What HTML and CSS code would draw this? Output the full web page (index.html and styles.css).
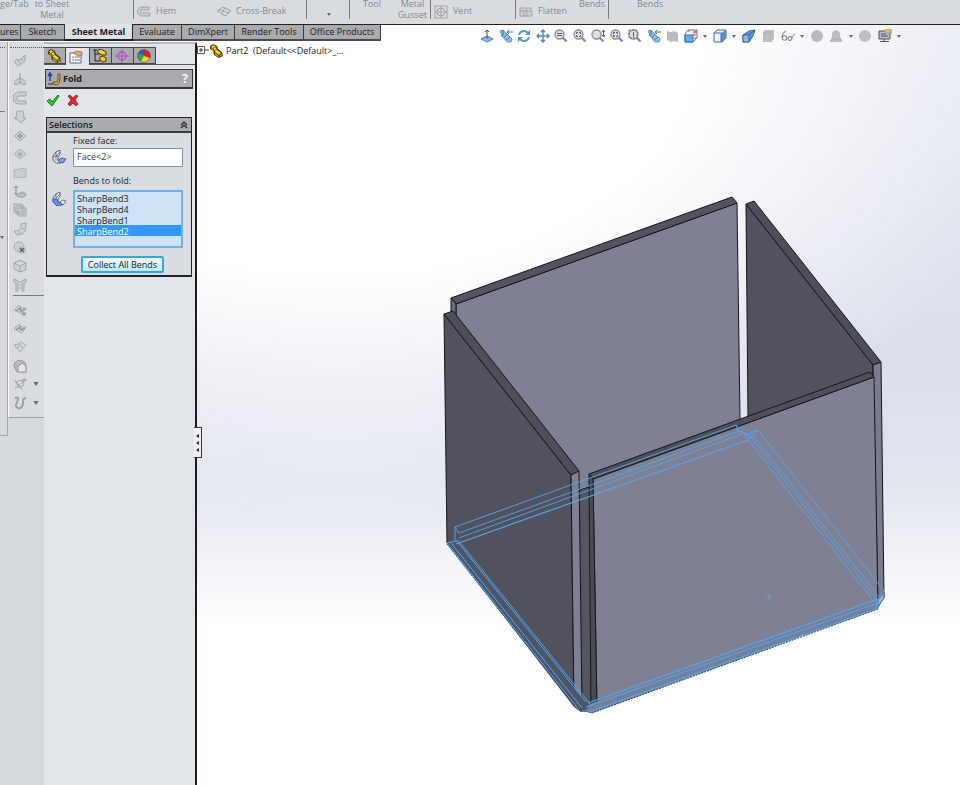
FILE: index.html
```html
<!DOCTYPE html>
<html lang="en">
<head>
  <meta charset="UTF-8" />
  <title>Part2 - Sheet Metal</title>
  <link rel="stylesheet" href="styles.css">
</head>
<body>
  <!-- shared icons -->
  <svg class="sprite" aria-hidden="true">
    <symbol id="i-part" viewBox="0 0 14 14"><path d="M1 2l3-2 4 2 1 3 4 3 1 4-4 2-5-3-1-4-3-2z" fill="#4a3a08"/><path d="M2 3l2-2 3 2 1 3 4 3-2 2-4-3-1-3z" fill="#f5d63a"/><path d="M2 4l2 1 1 3-2-2zM6 9l4 3v1L6 11zM11 11l2-1v1l-2 2z" fill="#d8a91c"/><path d="M4 4l3-1M6 7l2-2" stroke="#6b5410" stroke-width=".8"/></symbol>
    <symbol id="i-gpart" viewBox="0 0 14 14"><path d="M1 7l5-5 3 3 4 0-4 6-4-2z" fill="#c9cccf" stroke="#aaadb1"/><path d="M3 8l4-3 1 3 4-2" fill="none" stroke="#8f9296" stroke-width="1.300"/></symbol>
    <symbol id="i-lens" viewBox="0 0 14 14"><path d="M8.500 8.500l4 4" stroke="#6d8fc0" stroke-width="2.400"/><circle cx="5.500" cy="5.500" r="4.500" fill="#dddfe4" stroke="#8a8d92" stroke-width="1.300"/></symbol>
    <symbol id="i-spot" viewBox="0 0 14 14"><path d="M1 2l3-1 5 5 4 4-1 3-4 0-4-5z" fill="#8fbfe9" stroke="#4f83b5" stroke-width=".8"/><path d="M4 1v5l-2 1M8 5L5 9M11 8l-4 3" stroke="#42739f" fill="none"/><path d="M8 3h6M8 3l2-2M8 3l2 2" stroke="#3878b4" fill="none"/></symbol>
    <symbol id="i-arrow" viewBox="0 0 4 3"><path d="M0 0h4L2 3z" fill="#666a70"/></symbol>
    <symbol id="i-diamond" viewBox="0 0 14 14"><path d="M1 7l6-5 6 5-6 5z" fill="#cfd2d5" stroke="#aaadb1"/><path d="M4 7h6M7 4v6" stroke="#96999d" stroke-width="1.500"/></symbol>
  </svg>

  <header class="ribbon">
    <div class="cmd edge">ge/Tab</div>
    <div class="cmd to-sheet">to Sheet<br>Metal</div>
    <div class="group hem">
      <svg class="ico" viewBox="0 0 14 14"><path d="M12 2H5a4 4 0 0 0 0 9h8V8H5a1 1 0 0 1 0-3h7z" fill="#cbced2" stroke="#a0a3a7"/></svg><span>Hem</span>
    </div>
    <div class="group-plain cross">
      <svg class="ico" viewBox="0 0 14 14"><path d="M0 6l6-4 8 4-6 5zM2 5l10 3M5 9l3-7" fill="none" stroke="#9da0a4"/></svg><span>Cross-Break</span>
    </div>
    <div class="group more"><svg class="caret" viewBox="0 0 4 3"><use href="#i-arrow"/></svg></div>
    <div class="group gusset"><div class="cmd">Tool</div><div class="cmd">Metal<br>Gusset</div></div>
    <div class="group vent">
      <svg class="ico" viewBox="0 0 14 14"><path d="M1 1h12v12H1zM7 1v12M1 7h12" fill="none" stroke="#a0a3a7"/><circle cx="7" cy="7" r="4" fill="none" stroke="#a0a3a7"/></svg><span>Vent</span>
    </div>
    <div class="group flatten">
      <svg class="ico" viewBox="0 0 14 14"><path d="M1 3h7v8H1zM5 6h8v5H5zM1 6h5M9 3h3v3" fill="#cbced2" stroke="#a0a3a7"/></svg><span>Flatten</span>
      <div class="cmd bends">Bends</div>
    </div>
    <div class="group last"><div class="cmd">Bends</div></div>
  </header>

  <main class="workspace">
    <div class="top">
      <nav class="tabs">
        <a class="tab t-features" href="#">ures</a>
        <a class="tab t-sketch" href="#">Sketch</a>
        <a class="tab t-sheet active" href="#">Sheet Metal</a>
        <a class="tab t-evaluate" href="#">Evaluate</a>
        <a class="tab t-dim" href="#">DimXpert</a>
        <a class="tab t-render" href="#">Render Tools</a>
        <a class="tab t-office" href="#">Office Products</a>
      </nav>
      <div class="view-tools">
        <div class="tools-a">
          <button class="tool" aria-label="Normal to"><svg viewBox="0 0 14 14"><path d="M1 10l6-3 6 3-6 3z" fill="#8fbbe8" stroke="#477fb9"/><path d="M7 10V1M5 3l2-2 2 2" stroke="#4a4d55" fill="none"/></svg></button>
          <button class="tool" aria-label="Previous view"><svg viewBox="0 0 14 14"><use href="#i-spot"/></svg></button>
          <button class="tool" aria-label="Rotate"><svg viewBox="0 0 14 14"><path d="M2 6c1-5 7-5 9-2M12 8c-1 5-7 5-9 2" stroke="#5b97cd" stroke-width="2" fill="none"/><path d="M13 1v5H8zM1 13V8h5z" fill="#5b97cd"/></svg></button>
          <button class="tool" aria-label="Pan"><svg viewBox="0 0 14 14"><path d="M7 1v12M1 7h12M5 3l2-2 2 2M5 11l2 2 2-2M3 5L1 7l2 2M11 5l2 2-2 2" stroke="#4a8ac9" stroke-width="1.400" fill="none"/></svg></button>
          <button class="tool" aria-label="Zoom to selection"><svg viewBox="0 0 14 14"><use href="#i-lens"/><path d="M3 4.500h5M3 6.500h5" stroke="#5c5f65"/></svg></button>
          <button class="tool" aria-label="Zoom to fit"><svg viewBox="0 0 14 14"><use href="#i-lens"/><path d="M3.500 5V3.500H5M6 3.500h1.500V5M3.500 6v1.500H5M6 7.500h1.500V6" stroke="#5c5f65" fill="none"/></svg></button>
          <button class="tool" aria-label="Zoom in out"><svg viewBox="0 0 14 14"><use href="#i-lens"/><path d="M12.500 1v7M11 3l1.500-2L14 3M11 6l1.500 2L14 6" stroke="#5c5f65" fill="none"/></svg></button>
          <button class="tool" aria-label="Zoom sheet"><svg viewBox="0 0 14 14"><use href="#i-lens"/><path d="M3.500 5V3.500H5M6 3.500h1.500V5M3.500 6v1.500H5M6 7.500h1.500V6" stroke="#5c5f65" fill="none"/></svg></button>
          <button class="tool" aria-label="Zoom to area"><svg viewBox="0 0 14 14"><use href="#i-lens"/><path d="M1 1h8v8H1z" stroke="#74777d" fill="none" stroke-dasharray="2 1"/><path d="M5.500 3v5" stroke="#5c5f65"/></svg></button>
          <button class="tool" aria-label="Last view"><svg viewBox="0 0 14 14"><use href="#i-spot"/></svg></button>
          <button class="tool" aria-label="Section view"><svg viewBox="0 0 14 14"><path d="M2 2l4 1 3-1 4 2v9l-4-1-3 1-4-2z" fill="#b9bbbf"/></svg></button>
          <button class="tool" aria-label="View orientation"><svg viewBox="0 0 14 14"><path d="M1 5l3-4h9v8l-4 4H1z" fill="#f2f4f8" stroke="#6c7380"/><path d="M1 6h8v7H1z" fill="#68aee4" stroke="#356fa8"/><path d="M9 6l4-5M5 1v3M9 3h4M11 2v8" stroke="#ad5761" stroke-dasharray="2 1"/></svg></button>
        </div>
        <div class="tools-b">
          <svg class="caret" viewBox="0 0 4 3"><use href="#i-arrow"/></svg>
          <button class="tool" aria-label="Display style"><svg viewBox="0 0 14 14"><path d="M1 4l3-3h9v8l-4 4H1z" fill="#f0f5fc" stroke="#4668a4"/><path d="M8 4l5-3v8l-4 4H8z" fill="#5f8ad2"/><path d="M1 4h7v9" fill="none" stroke="#4668a4"/></svg></button>
          <svg class="caret" viewBox="0 0 4 3"><use href="#i-arrow"/></svg>
          <button class="tool" aria-label="Shaded"><svg viewBox="0 0 14 14"><path d="M1 6l6-4 6-1-2 6-4 6H1z" fill="#5e97dc" stroke="#264f8c" stroke-width=".8"/><path d="M1 6h6v7H1z" fill="#8ab9ed" stroke="#264f8c" stroke-width=".8"/><path d="M7 6l6-5" stroke="#264f8c" stroke-width=".8"/></svg></button>
          <button class="tool" aria-label="Shadows"><svg viewBox="0 0 14 14"><path d="M2 3l2-2h9v9l-3 3H2z" fill="#bcbec1"/><path d="M2 4h8v9" stroke="#aeb0b4" fill="none"/></svg></button>
          <button class="tool" aria-label="Hide show items"><svg viewBox="0 0 14 14"><path d="M5 2C2 3 1 7 1 9" stroke="#73777f" fill="none"/><circle cx="3.500" cy="9" r="2.300" fill="none" stroke="#73777f"/><circle cx="9" cy="9.500" r="2" fill="none" stroke="#73777f"/><path d="M11 9c0-2 1-3 3-4" fill="none" stroke="#73777f"/></svg></button>
          <svg class="caret" viewBox="0 0 4 3"><use href="#i-arrow"/></svg>
          <button class="tool" aria-label="Appearance"><svg viewBox="0 0 14 14"><circle cx="7" cy="7" r="6" fill="#b9bbbf"/></svg></button>
          <button class="tool" aria-label="Scene"><svg viewBox="0 0 14 14"><path d="M3 8V5c0-5 8-5 8 0v3l2 5H1z" fill="#babcc0"/><path d="M1 12l4-3 3 2 3-2 2 3" stroke="#a7a9ad" fill="none"/></svg></button>
          <svg class="caret" viewBox="0 0 4 3"><use href="#i-arrow"/></svg>
          <button class="tool" aria-label="Render"><svg viewBox="0 0 14 14"><circle cx="7" cy="7" r="6" fill="#bec0c4"/></svg></button>
          <button class="tool" aria-label="View settings"><svg viewBox="0 0 14 14"><path d="M1 2h11v8H1z" fill="#b9bcc2" stroke="#4d5057"/><path d="M3 5h5M3 7h7M2 12.500h9M6 10v2" stroke="#4d5057" fill="none"/><path d="M6 2l3-2 5 1v3L9 4z" fill="#e6b976" stroke="#a87c3c" stroke-width=".6"/></svg></button>
          <svg class="caret" viewBox="0 0 4 3"><use href="#i-arrow"/></svg>
        </div>
      </div>
    </div>

    <div class="columns">
      <div class="docks">
        <aside class="dock-thin">
          <div class="rule"></div>
          <svg class="caret" viewBox="0 0 4 3"><use href="#i-arrow"/></svg>
        </aside>
        <aside class="dock">
          <div class="stack stack-a">
            <button class="tool" aria-label="Base flange"><svg viewBox="0 0 14 14"><path d="M1 8l3-3 3 1 5-5v6l-6 5z" fill="#cdd0d3" stroke="#a4a7ab"/><path d="M5 6l3 4M8 4l2 3" stroke="#a4a7ab"/></svg></button>
            <button class="tool" aria-label="Lofted bend"><svg viewBox="0 0 14 14"><path d="M1 11c1-7 11-7 12 0l-3 1c-1-4-5-4-6 0z" fill="#cdd0d3" stroke="#a4a7ab"/><path d="M7 0v12" stroke="#96999d"/></svg></button>
            <button class="tool" aria-label="Hem"><svg viewBox="0 0 14 14"><path d="M13 1H6a5 5 0 0 0 0 12h7v-3H6a2 2 0 0 1 0-5h7z" fill="#cdd0d3" stroke="#a0a3a7"/></svg></button>
            <button class="tool" aria-label="Jog"><svg viewBox="0 0 14 14"><path d="M4 1h6l1 7h2l-5 5-3-3-4-2h2z" fill="#cdd0d3" stroke="#a4a7ab"/></svg></button>
            <button class="tool" aria-label="Edge"><svg viewBox="0 0 14 14"><use href="#i-diamond"/></svg></button>
            <button class="tool" aria-label="Miter"><svg viewBox="0 0 14 14"><path d="M1 7l6-5 6 5-6 5z" fill="#cfd2d5" stroke="#aaadb1"/><path d="M7 5l3 2-3 3-3-3z" fill="#a9acb0"/></svg></button>
            <button class="tool" aria-label="Tab"><svg viewBox="0 0 14 14"><path d="M1 4l12-2v9L1 12z" fill="#c9cccf" stroke="#b1b4b8"/></svg></button>
            <button class="tool" aria-label="Forming tool"><svg viewBox="0 0 14 14"><path d="M2 8c0 5 11 6 11 1L9 7 5 9z" fill="#b9bcbf" stroke="#9da0a4"/><path d="M3 9V1M1 3l2-2 2 2" fill="none" stroke="#8a8d91"/></svg></button>
            <button class="tool" aria-label="Cut"><svg viewBox="0 0 14 14"><path d="M1 1h8v8H1zM3 3h8v8H3zM5 5h8v8H5z" fill="#cdd0d3" stroke="#a4a7ab"/></svg></button>
            <button class="tool" aria-label="Corner"><svg viewBox="0 0 14 14"><path d="M13 1v5c0 4-4 7-9 7l-3-4c5 0 7-3 7-7zM9 6l3 2M6 9l2 3" fill="#cdd0d3" stroke="#a4a7ab"/></svg></button>
            <button class="tool" aria-label="Break corner"><svg viewBox="0 0 14 14"><circle cx="6" cy="6" r="5" fill="#cdd0d3" stroke="#aaadb1"/><circle cx="9" cy="9" r="4" fill="#bfc2c5"/><path d="M7 7l4 4M11 7l-4 4" stroke="#65686d" stroke-width="1.500"/></svg></button>
            <button class="tool" aria-label="Convert"><svg viewBox="0 0 14 14"><path d="M1 4l6-3 6 3v7l-6 2-6-3zM1 4l6 3 6-3M7 7v6" fill="#cdd0d3" stroke="#a4a7ab"/></svg></button>
            <button class="tool" aria-label="Rip"><svg viewBox="0 0 14 14"><path d="M1 1l4 2v10H3V5L1 4zM13 1L9 3v10h2V5l2-1z" fill="#cdd0d3" stroke="#a4a7ab"/><path d="M7 3v9" stroke="#a4a7ab" stroke-dasharray="2 1"/></svg></button>
          </div>
          <div class="stack stack-b">
            <button class="tool" aria-label="Unfold"><svg viewBox="0 0 14 14"><use href="#i-gpart"/><path d="M7 7l5 5M12 9v3H9" stroke="#85888d" fill="none"/></svg></button>
            <button class="tool" aria-label="Fold"><svg viewBox="0 0 14 14"><use href="#i-gpart"/></svg></button>
            <button class="tool" aria-label="Flatten"><svg viewBox="0 0 14 14"><path d="M1 5l4-1 3-2 5 3-6 7z" fill="#d3d6d9" stroke="#aaadb1"/><path d="M5 4l5 4M7 5l-3 3" stroke="#a4a7ab"/></svg></button>
            <button class="tool" aria-label="No bends"><svg viewBox="0 0 14 14"><path d="M1 7c0-7 9-7 11-3l1 3v6H4z" fill="#b7babd" stroke="#96999d"/><path d="M5 13V8l4-4 4 3v6z" fill="#e3e5e8" stroke="#96999d"/></svg></button>
            <div class="with-caret"><button class="tool" aria-label="Reference geometry"><svg viewBox="0 0 14 14"><path d="M1 3l9 10M2 12L13 2M3 5l5-2 3 5-5 3zM11 1v5M9 3h5" fill="none" stroke="#a0a3a7"/></svg></button><svg class="caret-big" viewBox="0 0 4 3"><use href="#i-arrow"/></svg></div>
            <div class="with-caret"><button class="tool" aria-label="Curves"><svg viewBox="0 0 14 14"><path d="M2 2c7-2 0 6 1 8 3 5 7 1 7-3s0-5 3-5" fill="none" stroke="#9b9ea2" stroke-width="2"/></svg></button><svg class="caret-big" viewBox="0 0 4 3"><use href="#i-arrow"/></svg></div>
          </div>
        </aside>
      </div>

      <section class="panel">
        <div class="panel-tabs">
          <button class="ptab" aria-label="Feature tree"><svg viewBox="0 0 14 14"><use href="#i-part"/></svg></button>
          <button class="ptab on" aria-label="Properties"><svg viewBox="0 0 14 14"><path d="M1 3h11v10H1z" fill="#fff" stroke="#5a6785"/><path d="M3 7h2M3 10h2M6 7h5M6 10h5" stroke="#5a76aa"/><path d="M4 3l4-2 5 1v3l-4 1z" fill="#e4a768" stroke="#9c6a33" stroke-width=".7"/></svg></button>
          <button class="ptab" aria-label="Configurations"><svg viewBox="0 0 14 14"><path d="M2 1v11h5M2 5h4M0 1h4" fill="none" stroke="#222"/><path d="M5 1l3-1 5 3v3L9 6 5 4zM7 8l3-1 3 2v3l-3 1-3-2z" fill="#f1cf35" stroke="#443608"/></svg></button>
          <button class="ptab" aria-label="DimXpert"><svg viewBox="0 0 14 14"><circle cx="7" cy="7" r="4" fill="none" stroke="#b04cc9" stroke-width="1.300"/><path d="M7 0v14M0 7h14" stroke="#b04cc9"/></svg></button>
          <button class="ptab" aria-label="Display"><svg viewBox="0 0 14 14"><circle cx="7" cy="7" r="6.300" fill="#f2d13a"/><path d="M7 7L1 5a6.300 6.300 0 0 1 6-4.300z" fill="#3058c8"/><path d="M7 7V.7A6.300 6.300 0 0 1 13 9z" fill="#d6202a"/><path d="M7 7L1 5a6.300 6.300 0 0 0 3 7.600z" fill="#3aa645"/><circle cx="7" cy="7" r="6.300" fill="none" stroke="#4a3630" stroke-width=".6"/></svg></button>
        </div>

        <div class="title">
          <svg class="ico" viewBox="0 0 14 14"><path d="M3 9V2M1 4l2-3 2 3" fill="none" stroke="#2044b8" stroke-width="1.600"/><path d="M1 12h5" stroke="#333"/><path d="M6 10l3 0c2 0 2-3 2-8h2c0 8-1 11-4 11l-3-1z" fill="#e0aa2b" stroke="#4f3d12" stroke-width=".8"/></svg>
          <h1>Fold</h1>
          <button class="help" aria-label="Help">?</button>
        </div>
        <div class="confirm">
          <button class="tool" aria-label="OK"><svg viewBox="0 0 14 14"><path d="M1 8l3-2 2 3 6-7 1 1-7 10z" fill="#3dc73b" stroke="#16741a"/></svg></button>
          <button class="tool" aria-label="Cancel"><svg viewBox="0 0 14 14"><path d="M2 3l2-1 3 3 3-3 2 1-3 4 3 4-2 2-3-3-3 3-2-2 3-4z" fill="#e0262a" stroke="#921015" stroke-width=".7"/></svg></button>
        </div>

        <div class="box">
          <h2>Selections
            <svg class="chev" viewBox="0 0 8 8"><path d="M1 4l3-3 3 3M1 7l3-3 3 3" fill="none" stroke="#222" stroke-width="1.200"/></svg>
          </h2>
          <div class="form">
            <label for="face">Fixed face:</label>
            <div class="field">
              <svg class="ico" viewBox="0 0 14 14"><path d="M1 6l3-4 4-2v4L6 7v3l3 3H4L1 10z" fill="#e9ecf2" stroke="#4b5262" stroke-width=".9"/><path d="M1 7l5-1M4 2v9M4 6l4-4" stroke="#4b5262" fill="none" stroke-width=".7"/><path d="M6 10l4-2 4 1-3 4-4-1z" fill="#7fa3ea" stroke="#2b3f86" stroke-width=".8"/></svg>
              <input id="face" type="text" value="Face<2>">
            </div>
            <label for="bends">Bends to fold:</label>
            <div class="field list">
              <svg class="ico" viewBox="0 0 14 14"><path d="M1 6l3-4 4-2v4L6 7v3l3 3H4L1 10z" fill="#e9ecf2" stroke="#4b5262" stroke-width=".9"/><path d="M4 2v5M4 6l4-4" stroke="#4b5262" stroke-width=".7"/><path d="M1 7l4 0 1 3 4 1-1 3H5L1 10z" fill="#5f97e4" stroke="#2b4f96" stroke-width=".8"/><path d="M8 10l3-2 3 1-3 4z" fill="#e9ecf2" stroke="#4b5262" stroke-width=".8"/></svg>
              <select id="bends" size="5">
                <option>SharpBend3</option>
                <option>SharpBend4</option>
                <option>SharpBend1</option>
                <option selected>SharpBend2</option>
              </select>
            </div>
            <button class="collect">Collect All Bends</button>
          </div>
        </div>
        <button class="splitter" aria-label="Hide panel"><svg viewBox="0 0 6 28"><path d="M5 5v4L2 7zM5 12v4l-3-2zM5 19v4l-3-2z" fill="#222"/></svg></button>
      </section>

      <section class="viewport">
        <div class="tree">
          <svg class="plus" viewBox="0 0 12 9"><path d="M.5.500h7v7h-7z" fill="#fff" stroke="#555"/><path d="M2 4h4M4 2v4M8 4h4" stroke="#333"/></svg>
          <svg class="ico" viewBox="0 0 14 14"><use href="#i-part"/></svg>
          <span>Part2&nbsp; (Default&lt;&lt;Default&gt;_...</span>
        </div>
        <svg class="model" viewBox="440 190 450 530">
          <g stroke="#15161c" stroke-width="1" stroke-linejoin="round">
            <!-- back wall -->
            <path d="M456 304L737 203L740 420L592 480L592 500H578L456 330z" fill="#7f8093"/>
            <path d="M451 298L732 197L737 203L456 304z" fill="#53545f"/>
            <path d="M451 298L456 304V316L451 312z" fill="#6a6b7b"/>
            <!-- right wall -->
            <path d="M746 204L873 365V390L748 418z" fill="#51525d"/>
            <path d="M746 204L754 201L881 362L873 365z" fill="#4d4e59"/>
            <path d="M873 365L881 362L884 597L878 607z" fill="#7a7b8d"/>
            <!-- left wall -->
            <path d="M579 490L592 486L594 710L580 708z" fill="#53555f"/>
            <path d="M444 314L571 475L574 704L447 543z" fill="#51525d"/>
            <path d="M444 314L453 311L579 471L571 475z" fill="#4d4e59"/>
            <path d="M571 475L579 471L582 706L574 704z" fill="#7f8093"/>
            <!-- front wall -->
            <path d="M593 479L874 377L878 608L597 710z" fill="#7f8093"/>
            <path d="M589 474L870 372L874 377L593 479z" fill="#4f505b"/>
            <path d="M589 474L593 479L597 710L591 710z" fill="#4a4b56"/>
          </g>
          <!-- base edge -->
          <path d="M447 543L456 540L586 703L592 712H581L574 707z" fill="#4d5567"/>
          <path d="M590 704L878 600V608L592 713L586 711z" fill="#74809b"/>
          <path d="M878 600L884 592V598L878 607z" fill="#a7b0c2" stroke="#536077"/>
          <path d="M447 544L577 709L592 713L878 609" fill="none" stroke="#263c59" stroke-dasharray="2 1"/>
          <!-- selected edges -->
          <g fill="none" stroke="#58a4ee">
            <path d="M455 527L736 425L739 431L459 533zM455 527V541M459 538L742 434" stroke-width=".9"/>
            <path d="M456 544L748 440" stroke-width="1.200"/>
            <path d="M736 425L739 431L748 434L758 430L748 440M742 432L750 438"/>
            <path d="M758 430L884 591M752 434L879 597M748 433L877 600M743 433L874 602" stroke-width=".9"/>
            <path d="M456 540L586 702M458 540L590 704M447 543L456 541M451 543L582 708M447 543L579 710"/>
            <path d="M588 703L878 599V608L592 711L582 711" stroke-width="1.200"/>
            <path d="M586 707L878 603M884 591L878 599M876 597V608"/>
            <path d="M766 597H772M769 594V600"/>
          </g>
        </svg>
      </section>
    </div>
  </main>
</body>
</html>
```
FILE: styles.css
```css
* {
  box-sizing: border-box;
}
body {
  margin: 0;
  height: 100vh;
  display: flex;
  flex-direction: column;
  overflow: hidden;
  font-family: "Open Sans", "Noto Sans", sans-serif;
  font-size: 9px;
  line-height: 11px;
  color: #1c1c1e;
}
button {
  font: inherit;
  padding: 0;
  border: none;
  background: none;
  cursor: pointer;
}
svg {
  display: block;
  flex: none;
}
.sprite {
  position: absolute;
  width: 0;
  height: 0;
}
.ico, .tool {
  width: 14px;
  height: 14px;
  flex: none;
}
.caret {
  width: 4px;
  height: 3px;
}
.caret-big {
  width: 6px;
  height: 4px;
}

/* ribbon */
.ribbon {
  display: flex;
  flex: none;
  height: 25px;
  background: #d9dce1;
  border-bottom: 1px solid #222;
  color: #85878b;
  white-space: nowrap;
  overflow: hidden;
}
.cmd {
  text-align: center;
  margin-top: -2px;
}
.edge {
  width: 27px;
}
.to-sheet {
  width: 50px;
  margin-right: 56px;
}
.group, .group-plain {
  display: flex;
  gap: 5px;
  padding: 5px 0 0 3px;
  height: 19px;
}
.group {
  border-left: 1px solid #77797e;
}
.group .cmd {
  margin-top: -7px;
}
.hem { width: 81px; }
.cross { width: 92px; }
.more {
  width: 43px;
  padding: 13px 0 0 20px;
}
.gusset {
  width: 81px;
  padding-left: 13px;
  gap: 17px;
}
.vent { width: 85px; }
.flatten { width: 93px; }
.bends { margin-left: 7px; }
.last { padding-left: 28px; }

/* work area with the sky gradient */
.workspace {
  flex: 1;
  display: flex;
  flex-direction: column;
  min-height: 0;
  background:
    radial-gradient(ellipse 720px 500px at 340px 0, #fff 50%, rgba(255,255,255,0) 100%),
    linear-gradient(#e4e8f1 0%, #dadeea 45%, #e1e5ee 60%, #fff 79%);
}
.top {
  display: flex;
  justify-content: space-between;
  align-items: flex-start;
  flex: none;
  height: 17px;
}
.tabs {
  display: flex;
  height: 16px;
}
.tab {
  background: #a9abaf;
  border-right: 1px solid #3b3c40;
  border-bottom: 2px solid #4b4c50;
  color: #1f2023;
  text-align: center;
  text-decoration: none;
  line-height: 13px;
  white-space: nowrap;
}
.tab.active {
  margin-top: -1px;
  height: 17px;
  background: #dfe2e6;
  font-weight: 700;
  line-height: 15px;
  border-color: #222;
}
.t-features { width: 21px; text-align: left; }
.t-sketch { width: 44px; }
.t-sheet { width: 68px; }
.t-evaluate { width: 49px; }
.t-dim { width: 53px; }
.t-render { width: 69px; }
.t-office { width: 77px; }
.view-tools {
  display: flex;
  gap: 5px;
  padding: 4px 59px 0 0;
}
.tools-a, .tools-b {
  display: flex;
  justify-content: space-between;
  align-items: center;
}
.tools-a { width: 218px; }
.tools-b { width: 198px; }

.columns {
  flex: 1;
  display: flex;
  min-height: 0;
}

/* docked toolbars */
.docks {
  display: flex;
  align-items: flex-start;
  width: 44px;
  flex: none;
  background: #d6dade;
}
.dock-thin {
  width: 8px;
  height: 394px;
  padding-top: 5px;
  border-right: 1px solid #a2a5a9;
  border-bottom: 1px solid #a2a5a9;
}
.rule {
  height: 65px;
  margin: 0 2px 124px 0;
  border-top: 1px dotted #555;
  border-bottom: 1px solid #77797e;
}
.dock {
  flex: 1;
  padding: 8px 0 7px 4px;
  border-left: 1px solid #fff;
  border-bottom: 1px solid #9a9da1;
  background: #d9dce1;
}
.dock::before {
  content: "";
  display: block;
  margin: -3px 0 6px -3px;
  border-top: 1px dotted #555;
}
.stack {
  display: flex;
  flex-direction: column;
  justify-content: space-between;
}
.stack-a {
  height: 238px;
}
.stack-b {
  height: 115px;
  margin-top: 3px;
  padding-top: 7px;
  border-top: 1px solid #77797e;
}
.with-caret {
  display: flex;
  align-items: center;
  gap: 6px;
}

/* property manager */
.panel {
  position: relative;
  width: 153px;
  flex: none;
  background: #e2e6eb;
  border-top: 2px solid #b4b8c6;
  border-right: 2px solid #1c1c1e;
}
.panel-tabs {
  display: flex;
  margin-top: 3px;
  height: 18px;
  border-bottom: 1px solid #55575b;
}
.ptab {
  width: 22px;
  height: 17px;
  padding: 1px 3px;
  background: #a9abaf;
  border: 1px solid #44464a;
  border-left-width: 0;
}
.ptab.on {
  width: 24px;
  height: 18px;
  background: #e2e6eb;
  border-bottom: none;
}
.ptab svg, .tool svg {
  width: 14px;
  height: 14px;
}
.title {
  display: flex;
  align-items: center;
  gap: 2px;
  margin: 4px 2px 0 1px;
  height: 20px;
  padding: 0 4px 0 1px;
  background: #a9abaf;
  border: 1px solid #333438;
  border-bottom-width: 2px;
}
.title h1 {
  flex: 1;
  margin: 0;
  font-size: 9px;
}
.help {
  color: #f4f5f7;
  font-size: 12px;
  font-weight: 700;
}
.confirm {
  display: flex;
  gap: 6px;
  padding: 4px 2px 10px;
}
.box {
  margin: 0 3px 0 2px;
  border: 1px solid #222;
  border-width: 1px 1px 2px 1px;
  background: #d9dce1;
}
.box h2 {
  display: flex;
  justify-content: space-between;
  align-items: center;
  margin: 0;
  height: 15px;
  padding: 0 3px 0 2px;
  font-size: 9px;
  font-weight: 600;
  background: #a9abaf;
  border-bottom: 2px solid #3b3c40;
}
.chev {
  width: 8px;
  height: 8px;
}
.form {
  display: flex;
  flex-direction: column;
  padding: 2px 8px 2px 5px;
}
.form label {
  margin-left: 21px;
}
.field {
  display: flex;
  gap: 7px;
  margin: 2px 0 8px;
}
.field .ico {
  margin-top: 2px;
}
.field input, .field select {
  flex: 1;
  min-width: 0;
  font: inherit;
  border: 1px solid #7f93ad;
  border-radius: 0;
  outline: none;
}
.field input {
  height: 19px;
  padding: 0 3px 2px;
  background: #fff;
  color: #3c3c40;
}
.field.list {
  margin-top: 4px;
}
.field select {
  height: 58px;
  padding: 0;
  border: 2px solid #6fb2e3;
  background: #cfe2f6;
  color: #1c1c1e;
  overflow: hidden;
}
.field option {
  min-height: 0;
  height: 11px;
  padding: 0 2px;
  line-height: 11px;
}
.field option:checked {
  background: linear-gradient(#3497fb, #3497fb);
  color: #fff;
}
.collect {
  width: 83px;
  height: 17px;
  margin-left: 29px;
  border: 2px solid #35a8d8;
  border-radius: 2px;
  background: linear-gradient(#f2fbfe, #bfe8f8);
  color: #1c1c1e;
  line-height: 13px;
}
/* handle sits over the border between panel and viewport */
.splitter {
  position: absolute;
  right: -7px;
  top: 383px;
  width: 8px;
  height: 31px;
  background: #eef0f5;
  border: 1px solid #333438;
  border-left: none;
}
.splitter svg {
  width: 6px;
  height: 28px;
}

.viewport {
  flex: 1;
  min-width: 0;
  display: flex;
  flex-direction: column;
}
.tree {
  display: flex;
  align-items: center;
  height: 17px;
  white-space: nowrap;
}
.plus {
  width: 12px;
  height: 9px;
}
.tree span {
  margin-left: 3px;
}
.model {
  width: 450px;
  height: 530px;
  margin: 131px 70px 0 auto;
}
```
